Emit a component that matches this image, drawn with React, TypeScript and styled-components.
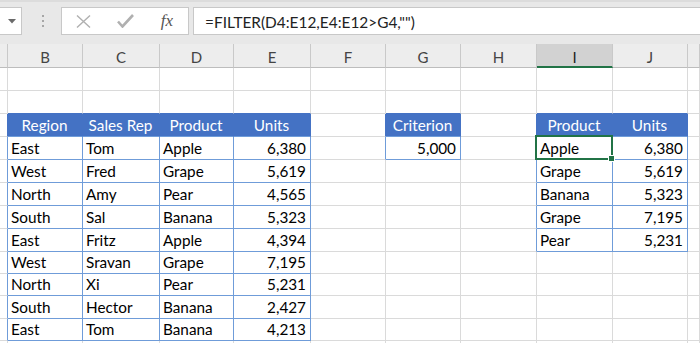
import React from "react";
import styled, { createGlobalStyle } from "styled-components";

const GlobalStyle = createGlobalStyle`
  html, body { margin: 0; padding: 0; background: #ffffff; overflow: hidden; }
  body { font-family: Lato, "Liberation Sans", sans-serif; }
`;

const GRID = "#dadada";
const HEAD_FILL = "#4472c4";
const TBL_BORDER = "#6f9cd9";
const GREEN = "#217346";

const COL_W = [8, 75, 77, 74, 77, 75, 75, 76, 76, 75];
const LETTERS = ["", "B", "C", "D", "E", "F", "G", "H", "I", "J", ""];
const ROW_H = [23, 23, 23, 23, 23, 23, 23, 23, 22, 22, 23, 22, 23];
const TEMPLATE = COL_W.map((w) => `${w}px`).join(" ") + " 1fr";

type Table = { r: number; c: number; data: string[][] };

const TABLES: Table[] = [
  {
    r: 3,
    c: 1,
    data: [
      ["Region", "Sales Rep", "Product", "Units"],
      ["East", "Tom", "Apple", "6,380"],
      ["West", "Fred", "Grape", "5,619"],
      ["North", "Amy", "Pear", "4,565"],
      ["South", "Sal", "Banana", "5,323"],
      ["East", "Fritz", "Apple", "4,394"],
      ["West", "Sravan", "Grape", "7,195"],
      ["North", "Xi", "Pear", "5,231"],
      ["South", "Hector", "Banana", "2,427"],
      ["East", "Tom", "Banana", "4,213"],
    ],
  },
  { r: 3, c: 6, data: [["Criterion"], ["5,000"]] },
  {
    r: 3,
    c: 8,
    data: [
      ["Product", "Units"],
      ["Apple", "6,380"],
      ["Grape", "5,619"],
      ["Banana", "5,323"],
      ["Grape", "7,195"],
      ["Pear", "5,231"],
    ],
  },
];

const SELECTED = { r: 4, c: 8 };

const inTable = (t: Table, r: number, c: number) =>
  r >= t.r && r < t.r + t.data.length && c >= t.c && c < t.c + t.data[0].length;

function cellModel(r: number, c: number) {
  let text = "";
  let header = false;
  let right = GRID;
  let bottom = GRID;
  for (const t of TABLES) {
    const rowsIn = r >= t.r && r < t.r + t.data.length;
    if (inTable(t, r, c)) {
      text = t.data[r - t.r][c - t.c];
      header = r === t.r;
      right = header ? HEAD_FILL : TBL_BORDER;
      bottom = TBL_BORDER;
    } else {
      if (rowsIn && c === t.c - 1) right = r === t.r ? HEAD_FILL : TBL_BORDER;
      if (r === t.r - 1 && c >= t.c && c < t.c + t.data[0].length) bottom = HEAD_FILL;
    }
  }
  const numeric = /^[\d,]+$/.test(text);
  return { text, header, right, bottom, align: header ? "center" : numeric ? "right" : "left" };
}

/* ---------- Formula bar ---------- */

const TopBar = styled.div`
  height: 44px;
  box-sizing: border-box;
  background: #e8e8e8;
  border-top: 2px solid #dcdcdc;
  padding-top: 5px;
  display: flex;
  align-items: flex-start;
`;

const NameBox = styled.div`
  width: 22px;
  height: 28px;
  box-sizing: border-box;
  background: #fff;
  border: 1px solid #c8c8c8;
  border-left: none;
  display: flex;
  align-items: center;
  justify-content: flex-end;
  padding-right: 5px;
`;

const Grip = styled.div`
  width: 39px;
  height: 28px;
  display: flex;
  flex-direction: column;
  align-items: center;
  justify-content: center;
  gap: 3px;
  padding-left: 3px;
  box-sizing: border-box;
`;

const GripDot = styled.span`
  width: 2px;
  height: 2px;
  background: #a6a6a6;
`;

const FuncBox = styled.div`
  width: 128px;
  height: 28px;
  box-sizing: border-box;
  background: #fff;
  border: 1px solid #c8c8c8;
  display: grid;
  grid-template-columns: repeat(3, 42px);
  align-items: center;
  justify-items: center;
`;

const Fx = styled.span`
  font-family: "Liberation Serif", "DejaVu Serif", serif;
  font-style: italic;
  font-size: 17px;
  color: #555;
  line-height: 1;
  margin-top: -2px;
`;

const FormulaBox = styled.div`
  flex: 1;
  margin-left: 4px;
  height: 28px;
  box-sizing: border-box;
  background: #fff;
  border: 1px solid #c8c8c8;
  border-right: none;
  display: flex;
  align-items: flex-end;
  padding: 0 0 3px 11px;
  font-size: 15.4px;
  line-height: 18px;
  color: #222;
  white-space: nowrap;
`;

/* ---------- Column headers ---------- */

const HeaderRow = styled.div`
  display: grid;
  grid-template-columns: ${TEMPLATE};
  height: 24px;
`;

const ColHead = styled.div<{ $active: boolean }>`
  box-sizing: border-box;
  background: ${(p) => (p.$active ? "#d2d2d2" : "#ededed")};
  border-right: 1px solid #c9c9c9;
  border-bottom: ${(p) => (p.$active ? `2px solid ${GREEN}` : "1px solid #bdbdbd")};
  color: ${(p) => (p.$active ? "#222" : "#444")};
  font-size: 15px;
  line-height: 18px;
  display: flex;
  align-items: flex-end;
  justify-content: center;
  padding-bottom: ${(p) => (p.$active ? "0px" : "1px")};
`;

/* ---------- Sheet ---------- */

const Sheet = styled.div`
  display: grid;
  grid-template-columns: ${TEMPLATE};
  grid-template-rows: ${ROW_H.map((h) => `${h}px`).join(" ")};
`;

const Cell = styled.div<{ $right: string; $bottom: string; $header: boolean; $align: string; $selected: boolean }>`
  box-sizing: border-box;
  position: ${(p) => (p.$selected ? "relative" : "static")};
  border-right: 1px solid ${(p) => p.$right};
  border-bottom: 1px solid ${(p) => p.$bottom};
  background: ${(p) => (p.$header ? HEAD_FILL : "#fff")};
  color: ${(p) => (p.$header ? "#fff" : "#000")};
  font-size: 15.3px;
  line-height: 18px;
  display: flex;
  align-items: flex-end;
  justify-content: ${(p) => (p.$align === "center" ? "center" : p.$align === "right" ? "flex-end" : "flex-start")};
  padding: 0 4px 2px 3px;
  white-space: nowrap;
  overflow: visible;
`;

const SelectBox = styled.div`
  position: absolute;
  top: -2px;
  left: -2px;
  right: -1px;
  bottom: -1px;
  border: 2px solid ${GREEN};
  z-index: 2;
  pointer-events: none;
`;

const FillHandle = styled.div`
  position: absolute;
  right: -4px;
  bottom: -4px;
  width: 5px;
  height: 5px;
  background: ${GREEN};
  border: 1px solid #fff;
`;

const Root = styled.div`
  width: 700px;
  height: 343px;
  overflow: hidden;
  background: #fff;
`;

export default function App() {
  return (
    <Root>
      <GlobalStyle />
      <TopBar>
        <NameBox>
          <svg width="8" height="5" viewBox="0 0 8 5">
            <path d="M0 0 H8 L4 4.5 Z" fill="#6a6a6a" />
          </svg>
        </NameBox>
        <Grip>
          <GripDot />
          <GripDot />
          <GripDot />
        </Grip>
        <FuncBox>
          <svg width="15" height="13" viewBox="0 0 15 13">
            <path d="M1 0.5 L14 12.5 M14 0.5 L1 12.5" stroke="#b0b0b0" strokeWidth="1.4" fill="none" />
          </svg>
          <svg width="17" height="14" viewBox="0 0 17 14">
            <path d="M1 7.5 L5.5 12.5 L16 1" stroke="#b0b0b0" strokeWidth="2.6" fill="none" />
          </svg>
          <Fx>fx</Fx>
        </FuncBox>
        <FormulaBox>=FILTER(D4:E12,E4:E12&gt;G4,"")</FormulaBox>
      </TopBar>
      <HeaderRow>
        {LETTERS.map((l, i) => (
          <ColHead key={i} $active={i === SELECTED.c}>
            {l}
          </ColHead>
        ))}
      </HeaderRow>
      <Sheet>
        {ROW_H.map((_, ri) =>
          LETTERS.map((__, c) => {
            const r = ri + 1;
            const m = cellModel(r, c);
            const sel = r === SELECTED.r && c === SELECTED.c;
            return (
              <Cell
                key={`${r}-${c}`}
                $right={m.right}
                $bottom={m.bottom}
                $header={m.header}
                $align={m.align}
                $selected={sel}
              >
                {m.text}
                {sel && (
                  <SelectBox>
                    <FillHandle />
                  </SelectBox>
                )}
              </Cell>
            );
          })
        )}
      </Sheet>
    </Root>
  );
}
